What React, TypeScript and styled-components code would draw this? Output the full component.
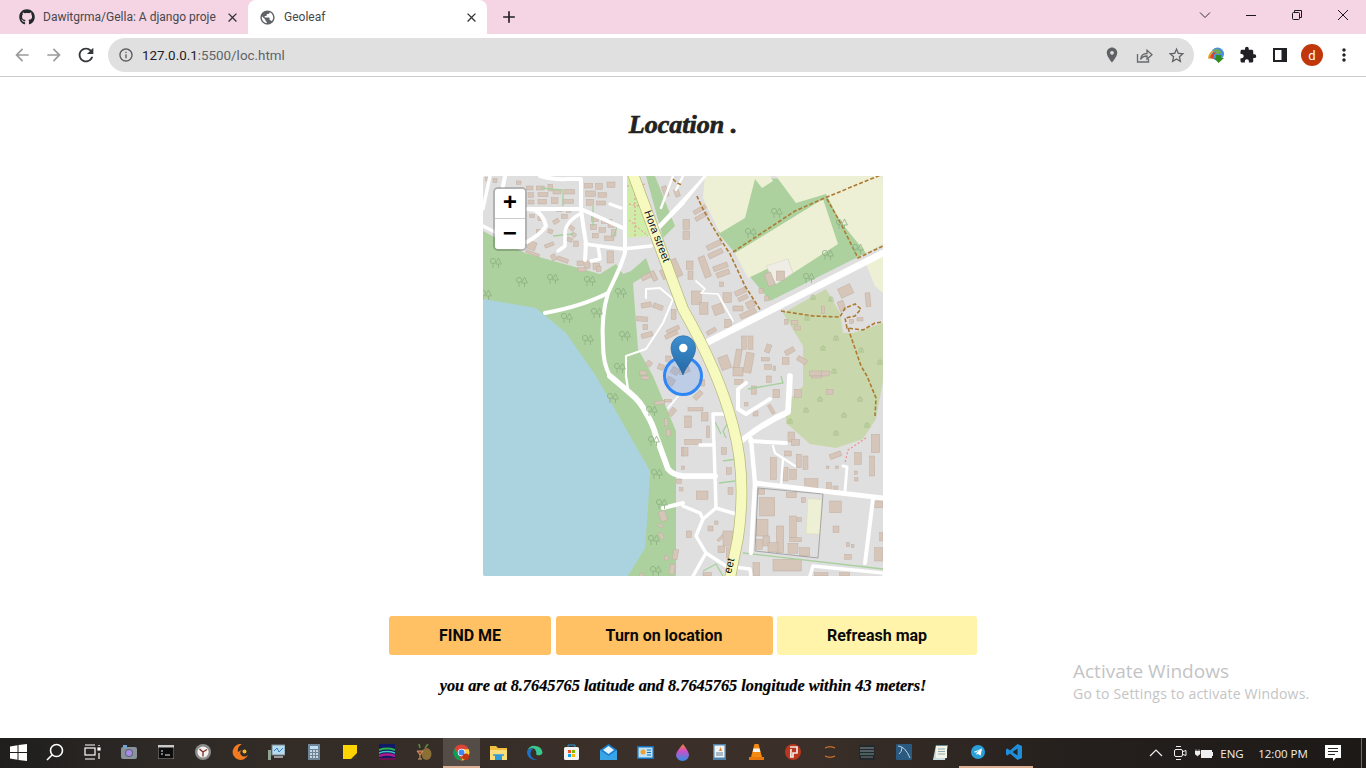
import React from 'react';
import styled, {createGlobalStyle} from 'styled-components';
import {FaGithub} from 'react-icons/fa';
import {
    MdAdd,
    MdArrowBack,
    MdArrowForward,
    MdClose,
    MdExtension,
    MdInfoOutline,
    MdLocationOn,
    MdMoreVert,
    MdPublic,
    MdRefresh,
    MdStarBorder,
} from 'react-icons/md';

const GlobalStyle = createGlobalStyle`
  html, body {
    margin: 0;
    padding: 0;
    background: #ffffff;
    overflow: hidden;
  }
`;

const Screen = styled.div`
  width: 1366px;
  height: 768px;
  display: flex;
  flex-direction: column;
  position: relative;
  overflow: hidden;
  font-family: Roboto, "Noto Sans", sans-serif;
`;

/* browser chrome */
const TabStrip = styled.div`
  height: 34px;
  background: #f5d4e4;
  display: flex;
  align-items: stretch;
  padding-left: 8px;
`;

const Tab = styled.div<{ $active?: boolean }>`
  width: ${p => (p.$active ? '239px' : '232px')};
  margin-left: ${p => (p.$active ? '8px' : '0')};
  background: ${p => (p.$active ? '#ffffff' : 'transparent')};
  border-radius: 8px 8px 0 0;
  display: flex;
  align-items: center;
  padding: 0 ${p => (p.$active ? '8px' : '0')} 0 11px;
  box-sizing: border-box;
  gap: 8px;
  color: #3c3f43;
  svg {
    flex: none;
  }
`;

const TabTitle = styled.span`
  flex: 1;
  font-size: 12px;
  white-space: nowrap;
  color: #45484c;
`;

const NewTab = styled.div`
  width: 44px;
  display: flex;
  align-items: center;
  justify-content: center;
  color: #222;
`;

const WindowControls = styled.div`
  margin-left: auto;
  display: flex;
  align-items: center;
  height: 30px;
`;

const WindowButton = styled.div`
  width: 46px;
  height: 28px;
  display: flex;
  align-items: center;
  justify-content: center;
`;

const Toolbar = styled.div`
  height: 42px;
  background: #fff;
  border-bottom: 1px solid #cccccc;
  display: flex;
  align-items: center;
  padding-left: 6px;
`;

const NavButton = styled.div<{ $dim?: boolean }>`
  width: 32px;
  height: 32px;
  display: flex;
  align-items: center;
  justify-content: center;
  color: ${p => (p.$dim ? '#9a9b9d' : '#333538')};
`;

const AddressBar = styled.div`
  margin-left: 6px;
  width: 1086px;
  height: 34px;
  border-radius: 17px;
  background: #e0e0e0;
  display: flex;
  align-items: center;
  padding: 0 2px 0 10px;
  box-sizing: border-box;
  color: #5a5c5f;
`;

const Url = styled.span`
  font-size: 13.4px;
  margin-left: 8px;
  color: #606367;
  flex: 1;
  b {
    font-weight: 400;
    color: #1f2124;
  }
`;

const BarIcon = styled.div`
  width: 32px;
  height: 32px;
  display: flex;
  align-items: center;
  justify-content: center;
  color: #5f6164;
`;

const ToolIcons = styled.div`
  display: flex;
  align-items: center;
  margin-left: 6px;
`;

const ToolIcon = styled.div`
  width: 32px;
  height: 32px;
  display: flex;
  align-items: center;
  justify-content: center;
  color: #202124;
`;

const Avatar = styled.div`
  width: 22px;
  height: 22px;
  border-radius: 50%;
  background: #c1370c;
  color: #fff;
  font-size: 13px;
  display: flex;
  align-items: center;
  justify-content: center;
`;

/* page */
const Main = styled.main`
  flex: 1;
  display: flex;
  flex-direction: column;
  align-items: center;
  background: #fff;
`;

const Title = styled.h1`
  margin: 28px 0 0;
  height: 40px;
  line-height: 40px;
  font-family: "Liberation Serif", serif;
  font-style: italic;
  font-weight: 700;
  font-size: 26px;
  color: #222222;
  -webkit-text-stroke: 0.7px #222222;
`;

const MapFrame = styled.div`
  position: relative;
  width: 400px;
  height: 400px;
  margin-top: 31px;
  border-radius: 3px;
  overflow: hidden;
  background: #e0dfdf;
  svg {
    display: block;
  }
`;

const ZoomControl = styled.div`
  position: absolute;
  left: 10px;
  top: 11px;
  width: 30px;
  border: 2px solid rgba(0, 0, 0, 0.2);
  border-radius: 5px;
  background-clip: padding-box;
  overflow: hidden;
`;

const ZoomButton = styled.div<{ $first?: boolean }>`
  width: 30px;
  height: 30px;
  background: #fff;
  display: flex;
  align-items: center;
  justify-content: center;
  font-family: "Liberation Mono", monospace;
  font-weight: 700;
  font-size: 24px;
  color: #000;
  border-bottom: ${p => (p.$first ? '1px solid #ccc' : 'none')};
  box-sizing: border-box;
`;

const ButtonRow = styled.div`
  display: flex;
  margin-top: 40px;
  gap: 4.5px;
`;

const ActionButton = styled.button<{ $width: number; $pale?: boolean }>`
  width: ${p => p.$width}px;
  height: 39px;
  border: none;
  border-radius: 3px;
  background: ${p => (p.$pale ? '#fff4a9' : '#ffc163')};
  font-family: Roboto, sans-serif;
  font-weight: 700;
  font-size: 16px;
  color: #0a0a0a;
  padding: 0;
`;

const Status = styled.p`
  margin: 19px 0 0;
  line-height: 24px;
  font-family: "Liberation Serif", serif;
  font-style: italic;
  font-weight: 700;
  font-size: 16.3px;
  color: #000;
  -webkit-text-stroke: 0.2px #000;
`;

const Watermark = styled.div`
  position: absolute;
  left: 1073px;
  top: 658px;
  color: #c4c4c4;
  font-family: "Open Sans", sans-serif;
  font-size: 14px;
  letter-spacing: 0.2px;
  line-height: 20px;
  span {
    display: block;
    font-size: 19px;
    line-height: 26px;
    letter-spacing: 0;
  }
`;

/* taskbar */
const Taskbar = styled.div`
  height: 30px;
  display: flex;
  align-items: stretch;
  background: linear-gradient(90deg, #1f1e1d 0%, #2f2a26 12%, #3b2f29 45%, #3a2f29 60%, #25201d 78%, #1d1917 100%);
  color: #fff;
`;

const TaskSlot = styled.div<{ $active?: boolean; $open?: boolean }>`
  width: 36.9px;
  flex: none;
  display: flex;
  align-items: center;
  justify-content: center;
  position: relative;
  background: ${p => (p.$active ? '#544c47' : 'transparent')};
  border-bottom: 2px solid ${p => (p.$open ? '#dbae93' : 'transparent')};
  box-sizing: border-box;
`;

const Tray = styled.div`
  margin-left: auto;
  display: flex;
  align-items: center;
  font-family: "Open Sans", sans-serif;
  font-size: 11.5px;
  color: #eee;
`;

const TrayItem = styled.div<{ $width: number }>`
  width: ${p => p.$width}px;
  display: flex;
  align-items: center;
  justify-content: center;
  white-space: nowrap;
`;

const ShowDesktop = styled.div`
  width: 4px;
  height: 30px;
  border-left: 1px solid #6b6b6b;
  margin-left: 15px;
`;

type Box = [number, number, number, number, number?];

// building footprints, in tripled coordinates of each map quarter
const topLeftBuildings: Box[] = [
    [8, 5, 14, 10], [30, 8, 12, 12], [100, 15, 14, 10], [130, 30, 20, 12], [160, 30, 24, 12], [195, 25, 14, 20],
    [135, 50, 16, 14], [165, 50, 30, 12], [210, 42, 24, 12], [245, 40, 30, 14], [135, 72, 18, 12], [165, 70, 26, 14],
    [205, 65, 20, 18], [240, 70, 32, 12], [305, 22, 24, 14], [338, 22, 20, 18], [372, 18, 24, 16], [308, 45, 30, 16],
    [345, 50, 26, 14], [310, 70, 22, 18], [340, 75, 28, 12], [325, 122, 22, 14], [355, 130, 32, 12], [322, 145, 18, 16],
    [348, 155, 20, 14], [375, 140, 22, 14], [328, 172, 18, 14], [365, 180, 28, 14], [385, 160, 14, 20], [258, 150, 16, 12, 40],
    [265, 170, 14, 12, 40], [252, 185, 16, 12, 20], [272, 195, 14, 16], [210, 130, 18, 12, -30], [195, 160, 14, 12, 20],
    [135, 197, 24, 24, 20], [128, 228, 42, 8, 20], [185, 202, 28, 10, -20], [205, 235, 14, 18, -30], [222, 245, 34, 12, 20],
    [282, 255, 20, 14], [305, 255, 16, 22], [330, 262, 20, 18], [285, 275, 24, 12], [372, 225, 20, 36], [340, 272, 14, 14],
    [540, 30, 14, 32, -20], [575, 40, 14, 22, -20], [560, 250, 30, 55, -25], [535, 280, 14, 30, -25], [505, 285, 14, 30, -25],
    [475, 295, 30, 14, -25], [475, 380, 30, 14, -10], [510, 385, 30, 14, 20], [460, 422, 34, 14, 5], [475, 470, 34, 14, -15],
    [480, 445, 14, 16], [565, 400, 14, 30], [550, 455, 40, 12, -25], [545, 470, 40, 12, -25], [490, 555, 16, 16, 40],
    [525, 565, 18, 16, 20], [548, 540, 16, 16], [470, 585, 20, 12], [150, 95, 16, 12], [220, 95, 18, 12], [250, 95, 14, 14],
    [140, 115, 14, 10], [165, 120, 16, 14], [235, 115, 18, 12], [160, 160, 14, 14], [565, 575, 22, 20, 30], [590, 565, 10, 30],
];

const topRightBuildings: Box[] = [
    [0, 130, 20, 30], [0, 165, 20, 25], [10, 255, 20, 25], [15, 285, 15, 25], [30, 95, 40, 12, -30], [35, 115, 40, 12, -30],
    [70, 200, 45, 15, -25], [75, 225, 45, 15, -25], [55, 240, 20, 65, -20], [90, 265, 45, 15, -20], [100, 285, 40, 15, -20],
    [25, 345, 30, 40], [50, 380, 25, 35], [90, 385, 30, 30, -20], [155, 340, 35, 15, -25], [165, 360, 30, 12, -25],
    [190, 375, 25, 20, -25], [170, 405, 50, 15, -25], [120, 350, 25, 30], [110, 318, 12, 14], [125, 430, 20, 25],
    [150, 390, 30, 15], [70, 460, 30, 12, -30], [250, 290, 20, 40, -20], [280, 285, 25, 28], [228, 338, 12, 14],
    [245, 360, 12, 15], [468, 330, 40, 30, -25], [548, 350, 14, 42, -5], [467, 375, 18, 30, -20], [500, 430, 12, 12],
    [522, 425, 18, 10], [415, 392, 10, 20], [175, 480, 15, 40], [195, 480, 15, 40], [155, 520, 18, 60, 10], [185, 530, 24, 60, 10],
    [110, 540, 30, 40, -20], [248, 505, 15, 25, 20], [305, 518, 30, 15, -30], [298, 545, 20, 20], [342, 545, 30, 15, 30],
    [380, 585, 40, 15], [235, 545, 25, 10], [245, 565, 20, 15], [270, 570, 8, 14], [305, 430, 10, 15], [325, 433, 20, 12],
    [335, 450, 18, 12], [150, 575, 30, 25], [415, 585, 25, 15], [75, 575, 20, 10], [0, 565, 18, 25, -20],
];

const bottomLeftBuildings: Box[] = [
    [515, 75, 30, 10, -5], [545, 70, 20, 8], [545, 128, 10, 22], [550, 160, 12, 20], [560, 95, 15, 25, 40], [475, 0, 24, 10],
    [595, 270, 10, 10], [580, 310, 15, 12], [590, 335, 10, 10], [530, 405, 20, 30, -20], [525, 445, 15, 8, 30],
    [530, 470, 10, 20, -30], [545, 540, 12, 12], [570, 520, 15, 30, 10], [560, 565, 15, 30, 10], [470, 592, 12, 8],
    [595, 215, 8, 25], [550, 5, 24, 22, 30],
];

const bottomRightBuildings: Box[] = [
    [5, 120, 20, 35], [55, 110, 20, 25], [15, 95, 45, 10], [70, 150, 10, 35], [5, 190, 50, 15], [0, 215, 15, 25],
    [115, 215, 15, 20], [130, 275, 15, 20], [135, 335, 15, 20], [40, 345, 35, 25], [10, 465, 15, 20], [75, 450, 15, 15],
    [100, 480, 30, 8, -45], [95, 435, 10, 10], [120, 465, 35, 45], [105, 510, 20, 20], [130, 515, 15, 30], [30, 50, 30, 15, -45],
    [50, 10, 15, 20], [155, 10, 25, 15], [205, 30, 15, 25], [250, 0, 15, 20], [270, 40, 20, 25], [210, 105, 15, 15],
    [260, 85, 10, 30, -30], [185, 80, 10, 10], [335, 40, 20, 25], [430, 40, 20, 15], [385, 0, 30, 6], [315, 168, 20, 30],
    [325, 190, 25, 18], [262, 245, 18, 65], [300, 275, 15, 40], [320, 280, 20, 30], [340, 235, 15, 40], [360, 240, 15, 40],
    [365, 308, 40, 27], [430, 320, 15, 20], [450, 330, 15, 10], [305, 225, 20, 15], [440, 230, 35, 15, -20], [515, 230, 20, 35],
    [560, 240, 15, 60], [565, 175, 25, 55], [430, 270, 8, 8], [458, 270, 8, 8], [515, 285, 8, 10], [515, 305, 10, 10],
    [440, 375, 35, 35], [450, 450, 18, 20], [490, 500, 10, 12], [505, 505, 8, 10], [485, 535, 20, 15], [310, 350, 30, 15],
    [355, 365, 12, 15], [575, 375, 25, 20], [590, 470, 10, 25], [575, 515, 25, 40], [210, 560, 20, 40], [470, 590, 30, 10],
    [230, 365, 45, 55], [220, 430, 35, 50], [240, 480, 20, 30], [280, 450, 22, 80], [220, 490, 18, 30], [255, 500, 30, 28],
    [320, 420, 20, 65], [342, 425, 14, 12], [320, 485, 35, 12], [315, 502, 30, 30], [350, 515, 30, 25], [270, 550, 85, 35],
    [225, 340, 20, 15], [60, 590, 25, 10], [395, 590, 40, 10],
];

const trees: [number, number][] = [
    [10, 87], [36, 106], [67, 103], [104, 105], [135, 117], [111, 137], [81, 142], [102, 164], [139, 160], [134, 192],
    [0, 119], [127, 222], [166, 235], [168, 265], [171, 298], [176, 328], [168, 364], [170, 395], [291, 37], [265, 57],
    [356, 48], [372, 73], [323, 102], [342, 79],
];

const tufts: [number, number][] = [
    [337, 222], [377, 222], [323, 233], [361, 238], [307, 244], [384, 248], [353, 256], [330, 120], [348, 122], [324, 141],
    [353, 161], [340, 171], [378, 173], [397, 185], [351, 194],
];

// white streets: [width, path]
const streets: [number, string][] = [
    [3, 'M7 0 L0 33'],
    [3, 'M0 50 L16 58'],
    [3.5, 'M45 33 L52 34 Q61 40 63 50 Q58 58 44 66'],
    [3.5, 'M57 0 Q72 4 84 3 L98 3 L98 33 Q100 50 103 67 L102 84'],
    [3.5, 'M22 0 L20 10'],
    [3.5, 'M45 33 L98 33 L140 52'],
    [3, 'M97 38 Q82 46 82 58 L82 70 L75 75'],
    [3, 'M102 68 L140 73 L168 70'],
    [3, 'M115 70 L117 83 L108 85'],
    [3, 'M127 28 L138 32'],
    [3.5, 'M142 0 L142 77 Q138 90 133 100 L125 117 Q100 130 62 137'],
    [3.5, 'M125 117 Q118 140 120 168 Q120 188 127 200'],
    [5, 'M127 200 L147 217 Q158 226 163 237 Q170 248 173 260 L185 293 Q190 299 200 300 L232 300'],
    [1.8, 'M143 200 L143 180 L163 173 L180 147 L190 123 L177 112 L163 113 L163 122'],
    [2, 'M143 200 L145 213'],
    [1.5, 'M185 232 L197 218'],
    [3.5, 'M180 332 L200 327'],
    [5, 'M307 200 L305 236 Q282 246 258 265'],
    [3.5, 'M267 265 L303 267'],
    [3.8, 'M268 263 L272 307 L268 377'],
    [4.2, 'M272 307 L400 322'],
    [2, 'M290 270 L292 277 L312 290'],
    [2, 'M300 283 L298 310'],
    [2.5, 'M360 290 L364 291 L362 315'],
    [3.5, 'M390 323 L382 387'],
    [3.5, 'M287 223 L263 238 L255 233 L255 213 L263 207'],
    [3, 'M242 238 L230 238 L232 300 L233 332 L253 338'],
    [3, 'M217 269 L230 269'],
    [3, 'M233 332 L220 343 L213 360 L223 377 L243 390 L267 393 L268 400'],
    [3, 'M200 330 L217 337 L220 343'],
    [3, 'M223 377 L210 400'],
    [3, 'M327 400 L330 390 L400 397'],
    [6, 'M223 167 L400 77'],
    [2.5, 'M200 27 L222 0'],
    [2, 'M190 0 L178 32 M193 14 L200 0'],
    [1.5, 'M175 50 L222 0'],
    [3, 'M168 60 L200 27'],
    [1.5, 'M213 105 L222 113 L218 117 L235 118 L250 145'],
];

const greenPaths = [
    'M110 30 L110 50 M58 12 L80 14 L80 30 M130 62 L135 48 M70 60 L90 58',
    'M246 245 L240 255 L243 262 M232 246 L238 258 M240 285 L254 283 M236 307 L252 305',
    'M260 377 L400 393',
    'M265 213 L300 207 L298 200',
    'M220 395 L233 388 L240 400',
];

const Buildings = ({items, x, y}: { items: Box[], x: number, y: number }) => (
    <g transform={`translate(${x} ${y}) scale(0.3333)`} fill="#d6c5b9" stroke="#bfac9e" strokeWidth="1.4">
        {items.map(([bx, by, w, h, r], i) => (
            <rect
                key={i}
                x={bx}
                y={by}
                width={w}
                height={h}
                transform={r ? `rotate(${r} ${bx + w / 2} ${by + h / 2})` : undefined}
            />
        ))}
    </g>
);

const MapDrawing = () => (
    <svg width="400" height="400" viewBox="0 0 400 400">
        <defs>
            <linearGradient id="pin" x1="0" y1="0" x2="0" y2="1">
                <stop offset="0" stopColor="#3f8fd0"/>
                <stop offset="1" stopColor="#2569a5"/>
            </linearGradient>
        </defs>
        <rect width="400" height="400" fill="#e0dfdf"/>

        {/* park by the lake */}
        <path
            d="M0 55 L42 77 L117 98 L133 88 L140 98 L148 95 L163 82 L168 96 L150 107 L155 173 L170 200 L193 255 L193 400 L145 400 L0 400 Z"
            fill="#add19e"
        />
        <path
            d="M0 123 L53 132 L83 157 L113 200 L167 295 L165 333 L162 372 L145 400 L0 400 Z"
            fill="#aad3df"
        />
        <path d="M163 0 L172 0 L192 50 L180 62 Z" fill="#add19e"/>
        <path d="M144 0 L152 0 L166 60 L144 62 Z" fill="#cfeca8"/>
        <path d="M144 10 L163 8 M146 28 L166 32 M146 44 L165 60 M152 10 L152 60" stroke="#ee8f8f"
              strokeWidth="1" strokeDasharray="2 2" fill="none"/>

        {/* fields, woods, scrub */}
        <path d="M235 57 L272 3 L400 0 L400 68 L383 77 L287 125 L268 102 L252 77 Z" fill="#add19e"/>
        <path d="M220 22 L237 57 L262 42 L272 3 L279 12 L290 5 L287 0 L222 0 Z" fill="#eef0d5"/>
        <path d="M293 0 L313 27 L343 18 L357 45 L383 77 L400 68 L400 0 Z" fill="#eef0d5"/>
        <path d="M252 77 L340 23 L355 68 L310 97 L305 83 L265 102 Z" fill="#eef0d5"/>
        <path d="M383 88 L400 80 L400 117 L392 110 Z" fill="#eef0d5"/>
        <path d="M283 90 L305 83 L310 97 L293 108 Z" fill="#efede6" stroke="#d8d6cd" strokeWidth="0.6"/>
        <path
            d="M300 137 L343 113 L357 137 L360 157 L370 157 L400 147 L400 205 L393 243 L380 263 L353 272 L327 268 L303 247 L303 227 L320 210 L320 170 Z"
            fill="#c9d8ac"
        />
        <rect x="324" y="323" width="14" height="35" transform="rotate(3 331 340)" fill="#eef0d5" stroke="#dcdcb8" strokeWidth="0.6"/>

        <Buildings items={topLeftBuildings} x={0} y={0}/>
        <Buildings items={topRightBuildings} x={200} y={0}/>
        <Buildings items={bottomLeftBuildings} x={0} y={200}/>
        <Buildings items={bottomRightBuildings} x={200} y={200}/>

        <path d="M275 312 L340 318 L335 382 L272 375 Z" fill="none" stroke="#8d8d8d" strokeWidth="0.7"/>

        {greenPaths.map((d, i) => (
            <path key={i} d={d} fill="none" stroke="#a6d09c" strokeWidth="1.3"/>
        ))}

        {streets.map(([w, d], i) => (
            <path key={i} d={d} fill="none" stroke="#fff" strokeWidth={w * 1.15} strokeLinecap="round" strokeLinejoin="round"/>
        ))}

        {/* tracks */}
        <g fill="none" stroke="#ad7a32" strokeWidth="1.6" strokeDasharray="4 2">
            <path d="M214 20 Q222 40 247 78 L262 110 L278 135"/>
            <path d="M250 76 L312 35 L344 21 L400 -2"/>
            <path d="M344 23 L358 48 L375 82 L400 70"/>
            <path d="M298 135 L330 140 L357 141 L362 132 L372 128 L378 133 L372 140 L362 142 L364 152 L380 154 L392 147 L400 146"/>
            <path d="M365 152 L378 190 L384 200 L393 222 L392 240"/>
            <path d="M190 3 Q196 10 200 8"/>
        </g>
        <path d="M383 262 L365 274 L362 287" fill="none" stroke="#ee8f8f" strokeWidth="1.2" strokeDasharray="2 2"/>

        {/* the main road */}
        <g fill="none" strokeLinecap="butt">
            <path d="M150 -2 L200 133 Q236 196 250 250 Q264 300 255 362 L247 402" stroke="#b9b97f" strokeWidth="11.5"/>
            <path d="M150 -2 L200 133 Q236 196 250 250 Q264 300 255 362 L247 402" stroke="#f7fabf" strokeWidth="10"/>
        </g>
        <text transform="translate(161 36) rotate(69)" fontFamily="'Liberation Sans', sans-serif" fontSize="11" fill="#111"
              stroke="#fff" strokeWidth="0.4" paintOrder="stroke">Hora street</text>
        <text transform="translate(248 398) rotate(-77)" fontFamily="'Liberation Sans', sans-serif" fontSize="11" fill="#111">eet</text>

        {trees.map(([x, y], i) => (
            <g key={i} transform={`translate(${x} ${y})`} fill="none" stroke="#8cae80" strokeWidth="0.8">
                <circle cx="0" cy="-2" r="2.6"/>
                <path d="M0 0.6 L0 5"/>
                <path d="M5.5 -5 L8.4 1 L2.6 1 Z M5.5 1 L5.5 5"/>
            </g>
        ))}
        {tufts.map(([x, y], i) => (
            <path
                key={i}
                d={`M${x - 3} ${y + 3} L${x + 3} ${y + 3} M${x} ${y + 3} L${x} ${y - 2} M${x - 2.5} ${y + 2} L${x - 1} ${y - 1} M${x + 2.5} ${y + 2} L${x + 1} ${y - 1}`}
                fill="none"
                stroke="#a3bd86"
                strokeWidth="0.8"
            />
        ))}

        {/* accuracy circle and marker */}
        <circle cx="200" cy="200" r="18.5" fill="#3388ff" fillOpacity="0.2" stroke="#2f86f5" strokeWidth="3"/>
        <path
            d="M200 199 C197 190 188 182 188 172 A12.3 12.3 0 0 1 212.6 172 C212.6 182 203 190 200 199 Z"
            fill="url(#pin)"
            stroke="#2a6ca5"
            strokeWidth="0.7"
        />
        <circle cx="200.3" cy="172" r="4.2" fill="#fff"/>
    </svg>
);

const WinMin = () => <svg width="12" height="12"><path d="M1 6.5 H11" stroke="#1a1a1a" strokeWidth="1"/></svg>;
const WinMax = () => (
    <svg width="12" height="12" fill="none" stroke="#1a1a1a">
        <rect x="1.5" y="3.5" width="7" height="7" rx="1"/>
        <path d="M3.5 3.5 V1.5 H10.5 V8.5 H8.5"/>
    </svg>
);
const WinClose = () => <svg width="12" height="12"><path d="M1 1 L11 11 M11 1 L1 11" stroke="#1a1a1a"/></svg>;
const WinList = () => <svg width="12" height="12"><path d="M1 3.5 L6 8.5 L11 3.5" stroke="#333" fill="none"/></svg>;

const ShareIcon = () => (
    <svg width="17" height="17" viewBox="0 0 17 17" fill="none" stroke="#67696c" strokeWidth="1.3">
        <path d="M1.5 7 V15 H12.5 V12"/>
        <path d="M4.5 12.5 C5 8.5 8 6.5 11 6.5 V3.2 L16 7.8 L11 12 V9 C8.5 9 6 10 4.5 12.5 Z"/>
    </svg>
);

const StarIcon = () => <MdStarBorder size={19}/>;

const DownloadIcon = () => (
    <svg width="18" height="16" viewBox="0 0 18 16">
        <circle cx="10.5" cy="7" r="6.5" fill="#4a90d9"/>
        <path d="M6 3 L11 2 L15 6 L10 7 Z" fill="#6fae48"/>
        <path d="M1 11 Q2 4 8 3 Q4 6 4 11 Q3 13 1 11 Z" fill="#e8a02c"/>
        <path d="M3 11 Q4 6 9 5 Q6 8 6 12 Z" fill="#d9442c"/>
        <path d="M9 8 H14 V11 H17 L11.5 16 L7 11 H9 Z" fill="#2f8a1f"/>
    </svg>
);

const SidePanelIcon = () => (
    <svg width="14" height="14">
        <rect width="14" height="14" fill="#202124"/>
        <rect x="2" y="2" width="6.5" height="10" fill="#fff"/>
    </svg>
);

// taskbar pictures
const taskIcons: { key: string, active?: boolean, open?: boolean, icon: React.ReactNode }[] = [
    {
        key: 'start',
        icon: <svg width="17" height="17"><path d="M0 2.5 L7.5 1.3 V8 H0 Z M8.5 1.1 L17 0 V8 H8.5 Z M0 9 H7.5 V15.8 L0 14.6 Z M8.5 9 H17 V17 L8.5 15.9 Z" fill="#fff"/></svg>,
    },
    {
        key: 'search',
        icon: <svg width="18" height="18" fill="none" stroke="#fff" strokeWidth="1.6"><circle cx="10.5" cy="7.5" r="6"/><path d="M6.3 11.7 L1 17"/></svg>,
    },
    {
        key: 'tasks',
        icon: <svg width="17" height="16" fill="none" stroke="#fff" strokeWidth="1.2"><path d="M1 1 H11 M1 15 H11"/><rect x="1" y="4" width="10" height="7"/><rect x="14" y="4" width="2" height="2" fill="#fff"/><path d="M15 9 V15 M15 1 V2"/></svg>,
    },
    {
        key: 'camera',
        icon: <svg width="16" height="14"><rect y="2" width="16" height="12" rx="2" fill="#8a939c"/><rect x="2" width="4" height="3" fill="#6ea5d8"/><circle cx="8" cy="8" r="4" fill="#5d6670"/><circle cx="8" cy="8" r="3" fill="#a88be8"/></svg>,
    },
    {
        key: 'cmd',
        icon: <svg width="16" height="14"><rect width="16" height="14" fill="#0d0d0d" stroke="#9a9a9a"/><rect width="16" height="2.5" fill="#c8c8c8"/><path d="M3 6 H5 M3 9 H5 M7 10 H12" stroke="#eee" strokeWidth="1.2"/></svg>,
    },
    {
        key: 'clock',
        icon: <svg width="16" height="16"><circle cx="8" cy="8" r="8" fill="#8c8c8c"/><circle cx="8" cy="8" r="5.6" fill="#f1f1f1"/><path d="M8 8 L4.5 5 M8 8 L12 5.5 M8 8 V12.5" stroke="#7a2a1e" strokeWidth="1.3"/></svg>,
    },
    {
        key: 'crescent',
        icon: <svg width="16" height="16"><path d="M10 0 A8 8 0 1 0 16 11 Q12 14 9 11 Q7 8 10 6 Q7 7 6 8 Q5 3 10 0 Z" fill="#f27a20"/><circle cx="12.5" cy="7.5" r="2" fill="#f9b52c"/></svg>,
    },
    {
        key: 'monitor',
        icon: <svg width="17" height="16"><rect x="4" y="1" width="13" height="10" fill="#b8dcef" stroke="#7b8a94"/><path d="M6 7 L9 4 L11 8 L15 4" stroke="#2f7dc1" fill="none"/><rect y="6" width="3" height="10" fill="#8fa392"/><rect x="6" y="12" width="9" height="2" fill="#9a9a9a"/></svg>,
    },
    {
        key: 'calc',
        icon: <svg width="12" height="16"><rect width="12" height="16" fill="#6d8597"/><rect x="2" y="2" width="8" height="3" fill="#bfe0f5"/><path d="M2 7 H4 M5 7 H7 M8 7 H10 M2 10 H4 M5 10 H7 M8 10 H10 M2 13 H4 M5 13 H7 M8 13 H10" stroke="#e8eef2" strokeWidth="1.5"/></svg>,
    },
    {
        key: 'sticky',
        icon: <svg width="14" height="14"><rect width="14" height="14" fill="#fdd400"/><path d="M14 8 L8 14 H14 Z" fill="#3a3324"/></svg>,
    },
    {
        key: 'bars',
        icon: <svg width="16" height="16"><rect width="16" height="16" fill="#101a66"/><path d="M0 6 Q8 3 16 6" stroke="#28b64a" strokeWidth="2" fill="none"/><path d="M0 9 Q8 6 16 9" stroke="#3fc7c0" strokeWidth="1.5" fill="none"/><path d="M0 12 Q8 9 16 12" stroke="#b01d8a" strokeWidth="2.5" fill="none"/><path d="M0 15 H16" stroke="#6d1450" strokeWidth="2"/></svg>,
    },
    {
        key: 'fruit',
        icon: <svg width="16" height="16"><ellipse cx="10.5" cy="10" rx="5" ry="6" fill="#8b6f37"/><path d="M1 7 H7 L4 11 Z M4 11 V15 M2 15 H6" stroke="#c9a46a" fill="#b33b30"/><path d="M4 4 L3 0 M9 4 L12 0" stroke="#57913c" strokeWidth="1.5"/></svg>,
    },
    {
        key: 'chrome',
        active: true,
        open: true,
        icon: (
            <svg width="17" height="17" viewBox="0 0 18 18">
                <circle cx="9" cy="9" r="8.5" fill="#db4437"/>
                <path d="M9 17.5 A8.5 8.5 0 0 1 1.6 4.8 L5.8 11 Z" fill="#0f9d58"/>
                <path d="M9 17.5 A8.5 8.5 0 0 0 16.6 5.5 H9 L12.5 11 Z" fill="#ffcd40"/>
                <circle cx="9" cy="9" r="4" fill="#fff"/>
                <circle cx="9" cy="9" r="3.1" fill="#4285f4"/>
                <circle cx="13.5" cy="13.5" r="3.5" fill="#bf3a12"/>
            </svg>
        ),
    },
    {
        key: 'folder',
        icon: <svg width="17" height="15"><path d="M0 1 H6 L8 3 H17 V15 H0 Z" fill="#f0c040"/><rect y="5" width="17" height="10" fill="#f9dc7c"/><path d="M5 15 V10 H12 V15 Z" fill="#2f9ad8"/><path d="M3 10 H14" stroke="#2f9ad8" strokeWidth="1.5"/></svg>,
    },
    {
        key: 'edge',
        icon: (
            <svg width="17" height="17" viewBox="0 0 18 18">
                <path d="M1 8 A8.5 8.5 0 0 1 17.5 9 Q17 12 13 12 Q10 12 11 9 Q10 4 6 4.5 Q2 5 1 8 Z" fill="#38c98e"/>
                <path d="M1 8 Q3 4 8 5 Q4 7 5 12 Q7 17 13 16 A8.5 8.5 0 0 1 1 8 Z" fill="#1b72c9"/>
            </svg>
        ),
    },
    {
        key: 'store',
        icon: (
            <svg width="15" height="16">
                <rect y="3" width="15" height="13" rx="1.5" fill="#f4f4f4"/>
                <path d="M4 3 V1 H11 V3" stroke="#2e9ad8" fill="none"/>
                <rect x="4" y="6" width="3" height="3" fill="#f25022"/>
                <rect x="8" y="6" width="3" height="3" fill="#7fba00"/>
                <rect x="4" y="10" width="3" height="3" fill="#00a4ef"/>
                <rect x="8" y="10" width="3" height="3" fill="#ffb900"/>
            </svg>
        ),
    },
    {
        key: 'mail',
        icon: <svg width="17" height="16"><path d="M0 6 L8.5 0 L17 6 V16 H0 Z" fill="#1a7fd0"/><path d="M0 6 L8.5 12 L17 6 V16 H0 Z" fill="#38a5e8"/><path d="M3 6 L8.5 2 L14 6 L8.5 10 Z" fill="#e7f3fb"/></svg>,
    },
    {
        key: 'board',
        icon: <svg width="17" height="13"><rect width="17" height="13" fill="#1472bd"/><rect x="1.5" y="1.5" width="14" height="10" fill="#bfe1f5"/><circle cx="6" cy="6" r="2.5" fill="#f0a22a"/><path d="M10 4 H14 M10 6.5 H14 M10 9 H14" stroke="#1472bd"/></svg>,
    },
    {
        key: 'drop',
        icon: (
            <svg width="13" height="17">
                <defs>
                    <linearGradient id="dropFill" x1="0" y1="0" x2="0" y2="1">
                        <stop offset="0" stopColor="#f0882c"/>
                        <stop offset="0.4" stopColor="#d14fc4"/>
                        <stop offset="1" stopColor="#2f8fe8"/>
                    </linearGradient>
                </defs>
                <path d="M7 0 Q13 8 13 11 A6.5 6 0 0 1 0 11 Q0 8 7 0 Z" fill="url(#dropFill)"/>
            </svg>
        ),
    },
    {
        key: 'notepad',
        icon: <svg width="13" height="16"><rect width="13" height="16" fill="#4f80ac"/><rect x="1.5" y="1.5" width="10" height="12" fill="#f1f4f6"/><path d="M6 7 L7.5 3 L9 7 Z" fill="#e6822d"/><path d="M3 9 H10 M3 11 H10" stroke="#5d7f9b"/></svg>,
    },
    {
        key: 'vlc',
        icon: <svg width="15" height="16"><path d="M5.5 0 H9.5 L13 13 H2 Z" fill="#f48a12"/><path d="M4.5 4.5 H10.5 L11.3 8 H3.7 Z" fill="#f4f4f4"/><path d="M0 13 H15 V16 H0 Z" fill="#e8780c"/></svg>,
    },
    {
        key: 'psiphon',
        icon: <svg width="16" height="16"><circle cx="8" cy="8" r="8" fill="#b8371e"/><path d="M5 3 H12 V9 H8 V13 H5.8 L6 5" fill="none" stroke="#f4e7e2" strokeWidth="1.7"/></svg>,
    },
    {
        key: 'bracket',
        icon: <svg width="10" height="14" fill="none" stroke="#ef7f28" strokeWidth="1.1"><path d="M0 3 Q5 0.5 10 3 M0 11 Q5 13.5 10 11"/></svg>,
    },
    {
        key: 'dark',
        icon: <svg width="16" height="15"><rect width="16" height="15" fill="#24282c"/><path d="M1 3 H15 M1 6 H15" stroke="#66717a" strokeWidth="1.3"/><path d="M1 9 H15" stroke="#5b8a7c" strokeWidth="1.2"/><path d="M2 12 H14" stroke="#4a5258" strokeWidth="2"/></svg>,
    },
    {
        key: 'mysql',
        icon: <svg width="16" height="16"><rect width="16" height="16" rx="1" fill="#2a5a80"/><path d="M2 2 Q9 2 14 14 M6 3 Q6 8 3 10" stroke="#bcd2e0" fill="none"/></svg>,
    },
    {
        key: 'pad',
        icon: <svg width="15" height="16"><path d="M3 1 H15 L12 16 H0 Z" fill="#c8dcdf"/><path d="M3 1 H15 V3 H3 Z" fill="#6c8c96"/><rect x="3" y="2" width="11" height="12" fill="#f4f4e6"/><path d="M5 5 H12 M5 7.5 H12 M5 10 H12" stroke="#8fa8b0"/></svg>,
    },
    {
        key: 'telegram',
        open: true,
        icon: <svg width="14" height="14"><circle cx="7" cy="7" r="7" fill="#2a9fd8"/><path d="M2.6 7 L11 3.5 L9.6 10.8 L6.8 8.8 L5.6 10 L5.4 8 L9 4.8 L4.6 7.6 Z" fill="#fff"/></svg>,
    },
    {
        key: 'vscode',
        open: true,
        icon: <svg width="16" height="16"><path d="M11.5 0 L16 2 V14 L11.5 16 L4 9.5 L1.5 11.5 L0 10.5 V5.5 L1.5 4.5 L4 6.5 Z M11.5 4.5 L6.5 8 L11.5 11.5 Z" fill="#1d8fdc" fillRule="evenodd"/></svg>,
    },
];

const App = () => (
    <Screen>
        <GlobalStyle/>
        <TabStrip>
            <Tab>
                <FaGithub size={16} color="#24292e"/>
                <TabTitle>Dawitgrma/Gella: A django proje</TabTitle>
                <MdClose size={15} color="#333"/>
            </Tab>
            <Tab $active>
                <MdPublic size={17} color="#5f6368"/>
                <TabTitle>Geoleaf</TabTitle>
                <MdClose size={15} color="#333"/>
            </Tab>
            <NewTab><MdAdd size={20}/></NewTab>
            <WindowControls>
                <WindowButton><WinList/></WindowButton>
                <WindowButton><WinMin/></WindowButton>
                <WindowButton><WinMax/></WindowButton>
                <WindowButton><WinClose/></WindowButton>
            </WindowControls>
        </TabStrip>
        <Toolbar>
            <NavButton $dim><MdArrowBack size={20}/></NavButton>
            <NavButton $dim><MdArrowForward size={20}/></NavButton>
            <NavButton><MdRefresh size={22}/></NavButton>
            <AddressBar>
                <MdInfoOutline size={16}/>
                <Url><b>127.0.0.1</b>:5500/loc.html</Url>
                <BarIcon><MdLocationOn size={18}/></BarIcon>
                <BarIcon><ShareIcon/></BarIcon>
                <BarIcon><StarIcon/></BarIcon>
            </AddressBar>
            <ToolIcons>
                <ToolIcon><DownloadIcon/></ToolIcon>
                <ToolIcon><MdExtension size={18}/></ToolIcon>
                <ToolIcon><SidePanelIcon/></ToolIcon>
                <ToolIcon><Avatar>d</Avatar></ToolIcon>
                <ToolIcon><MdMoreVert size={20}/></ToolIcon>
            </ToolIcons>
        </Toolbar>

        <Main>
            <Title>Location .</Title>
            <MapFrame>
                <MapDrawing/>
                <ZoomControl>
                    <ZoomButton $first>+</ZoomButton>
                    <ZoomButton>−</ZoomButton>
                </ZoomControl>
            </MapFrame>
            <ButtonRow>
                <ActionButton $width={162}>FIND ME</ActionButton>
                <ActionButton $width={217}>Turn on location</ActionButton>
                <ActionButton $width={200} $pale>Refreash map</ActionButton>
            </ButtonRow>
            <Status>you are at 8.7645765 latitude and 8.7645765 longitude within 43 meters!</Status>
        </Main>

        <Watermark>
            <span>Activate Windows</span>
            Go to Settings to activate Windows.
        </Watermark>

        <Taskbar>
            {taskIcons.map(item => (
                <TaskSlot key={item.key} $active={item.active} $open={item.open}>{item.icon}</TaskSlot>
            ))}
            <Tray>
                <TrayItem $width={28}>
                    <svg width="14" height="8" fill="none" stroke="#eee" strokeWidth="1.2"><path d="M1 7 L7 1 L13 7"/></svg>
                </TrayItem>
                <TrayItem $width={20}>
                    <svg width="14" height="18" fill="none" stroke="#eee"><rect x="1.5" y="5.5" width="8" height="7" rx="1.5"/><path d="M10 7.5 L13 6.5 V11.5 L10 10.5 M3 2.5 H8 M3 15.5 H8"/></svg>
                </TrayItem>
                <TrayItem $width={28}>
                    <svg width="18" height="12"><path d="M1 2 V4 M4 2 V4 M0 4 H5 V7 L2.5 9 L0 7 Z" fill="#eee" stroke="#eee" strokeWidth="0.5"/><rect x="6.5" y="3.5" width="10" height="7" fill="#eee" stroke="#eee"/><rect x="17" y="5" width="1" height="4" fill="#eee"/></svg>
                </TrayItem>
                <TrayItem $width={28}>ENG</TrayItem>
                <TrayItem $width={74}>12:00 PM</TrayItem>
                <TrayItem $width={26}>
                    <svg width="16" height="16"><path d="M0 0 H16 V13 H11 L8 16 L8 13 H0 Z" fill="#fff"/><path d="M3 3.5 H13 M3 6.5 H13 M3 9.5 H10" stroke="#2a2522"/></svg>
                </TrayItem>
                <ShowDesktop/>
            </Tray>
        </Taskbar>
    </Screen>
);

export default App;
